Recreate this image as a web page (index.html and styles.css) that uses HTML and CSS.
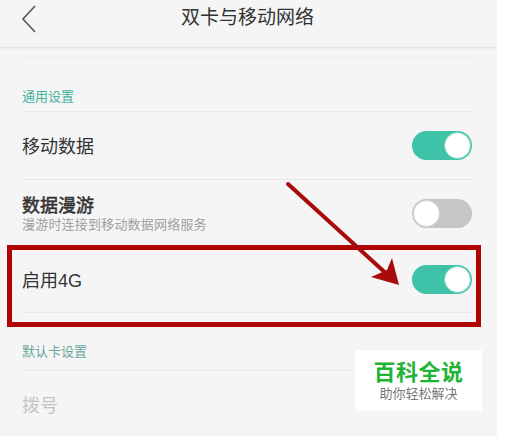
FILE: index.html
```html
<!DOCTYPE html>
<html lang="zh">
<head>
    <meta charset="UTF-8">
    <meta name="viewport" content="width=device-width, initial-scale=1.0">
    <title>双卡与移动网络</title>
    <link rel="stylesheet" href="styles.css">
</head>
<body>
    <div class="screen">
        <div class="header">
            <svg class="back" width="16" height="28" viewBox="0 0 16 28">
                <polyline points="14,1 2,14 14,27" fill="none" stroke="#555" stroke-width="1.6"/>
            </svg>
            <div class="title">双卡与移动网络</div>
        </div>

        <div class="list">
            <div class="top-line"></div>

            <div class="section section-first">通用设置</div>

            <div class="row">
                <div class="label">移动数据</div>
                <div class="switch on"><span class="knob"></span></div>
            </div>
            <div class="row row-sub">
                <div class="text-pair">
                    <div class="label label-strong">数据漫游</div>
                    <div class="sub">漫游时连接到移动数据网络服务</div>
                </div>
                <div class="switch off"><span class="knob"></span></div>
            </div>
            <div class="row row-4g">
                <div class="label">启用4G</div>
                <div class="switch on"><span class="knob"></span></div>
            </div>

            <div class="section section-second">默认卡设置</div>

            <div class="row row-last">
                <div class="label label-dim">拨号</div>
            </div>
        </div>

        <!-- annotations -->
        <div class="highlight"></div>
        <svg class="arrow" width="497" height="436" viewBox="0 0 497 436">
            <line x1="288" y1="184" x2="390" y2="277" stroke="#a80b0b" stroke-width="4" stroke-linecap="round"/>
            <polygon points="399,285 392,258 387,270 371,277" fill="#a80b0b"/>
        </svg>

        <div class="badge">
            <div class="badge-title">百科全说</div>
            <div class="badge-sub">助你轻松解决</div>
        </div>
    </div>
</body>
</html>
```

FILE: styles.css
```css
body {
    margin: 0;
    background: #fff;
    font-family: "Liberation Sans", "Noto Sans CJK SC", sans-serif;
}
.screen {
    position: relative;
    width: 497px;
    height: 436px;
    overflow: hidden;
    background: #f5f5f5;
}
.header {
    height: 47px;
    border-bottom: 1px solid #e4e4e4;
    box-shadow: 0 1px 2px rgba(0, 0, 0, 0.04);
    display: flex;
    align-items: flex-start;
    justify-content: center;
    position: relative;
}
.back {
    position: absolute;
    left: 21px;
    top: 5px;
}
.title {
    font-size: 19px;
    color: #333;
    line-height: 36px;
    margin-right: 2px;
}
.list {
    padding: 0 25px 0 22px;
}
.top-line {
    height: 9px;
    border-bottom: 1px solid #ebebeb;
}
.section {
    font-size: 13px;
    color: #45b19e;
    border-bottom: 1px solid #e8e8e8;
    display: flex;
    align-items: flex-end;
}
.section-first {
    height: 54px;
    padding-bottom: 6px;
    box-sizing: border-box;
}
.section-second {
    height: 58px;
    padding-bottom: 10px;
    box-sizing: border-box;
    color: #6aa89c;
}
.row {
    height: 67px;
    display: flex;
    align-items: center;
    justify-content: space-between;
    border-bottom: 1px solid #e8e8e8;
}
.row-sub {
    height: 66px;
    border-bottom: none;
}
.row-4g {
    height: 66px;
}
.row-last {
    border-bottom: none;
}
.label {
    font-size: 18px;
    color: #333;
    line-height: 24px;
    padding-top: 3px;
}
.text-pair {
    padding-top: 1px;
}
.label-strong {
    -webkit-text-stroke: 0.5px #333;
    line-height: 21px;
    padding-top: 0;
}
.label-dim {
    color: #c4c4c4;
}
.sub {
    font-size: 13px;
    letter-spacing: 0.2px;
    color: #a0a0a0;
    line-height: 15px;
}
.switch {
    width: 60px;
    height: 29px;
    border-radius: 15px;
    box-sizing: border-box;
    display: flex;
    align-items: center;
    padding: 0 1px;
}
.switch.on {
    background: #3ec3a8;
    justify-content: flex-end;
}
.switch.off {
    background: #c6c6c6;
    justify-content: flex-start;
}
.knob {
    width: 27px;
    height: 27px;
    border-radius: 50%;
    background: #fff;
    box-sizing: border-box;
}
.switch.on .knob {
    border: 1.5px solid #7dd3c1;
}
.switch.off .knob {
    border: 1.5px solid #d4d4d4;
}
.highlight {
    position: absolute;
    left: 7px;
    top: 245px;
    width: 474px;
    height: 82px;
    border: 5px solid #b00505;
    box-sizing: border-box;
}
.arrow {
    position: absolute;
    left: 0;
    top: 0;
}
.badge {
    position: absolute;
    left: 355px;
    top: 350px;
    width: 127px;
    height: 61px;
    background: #fff;
    text-align: center;
}
.badge-title {
    font-size: 22px;
    font-weight: bold;
    color: #1fb436;
    line-height: 25px;
    margin-top: 10px;
    letter-spacing: 0.5px;
}
.badge-sub {
    font-size: 13px;
    color: #777;
    line-height: 16px;
    margin-top: 1px;
}
```
